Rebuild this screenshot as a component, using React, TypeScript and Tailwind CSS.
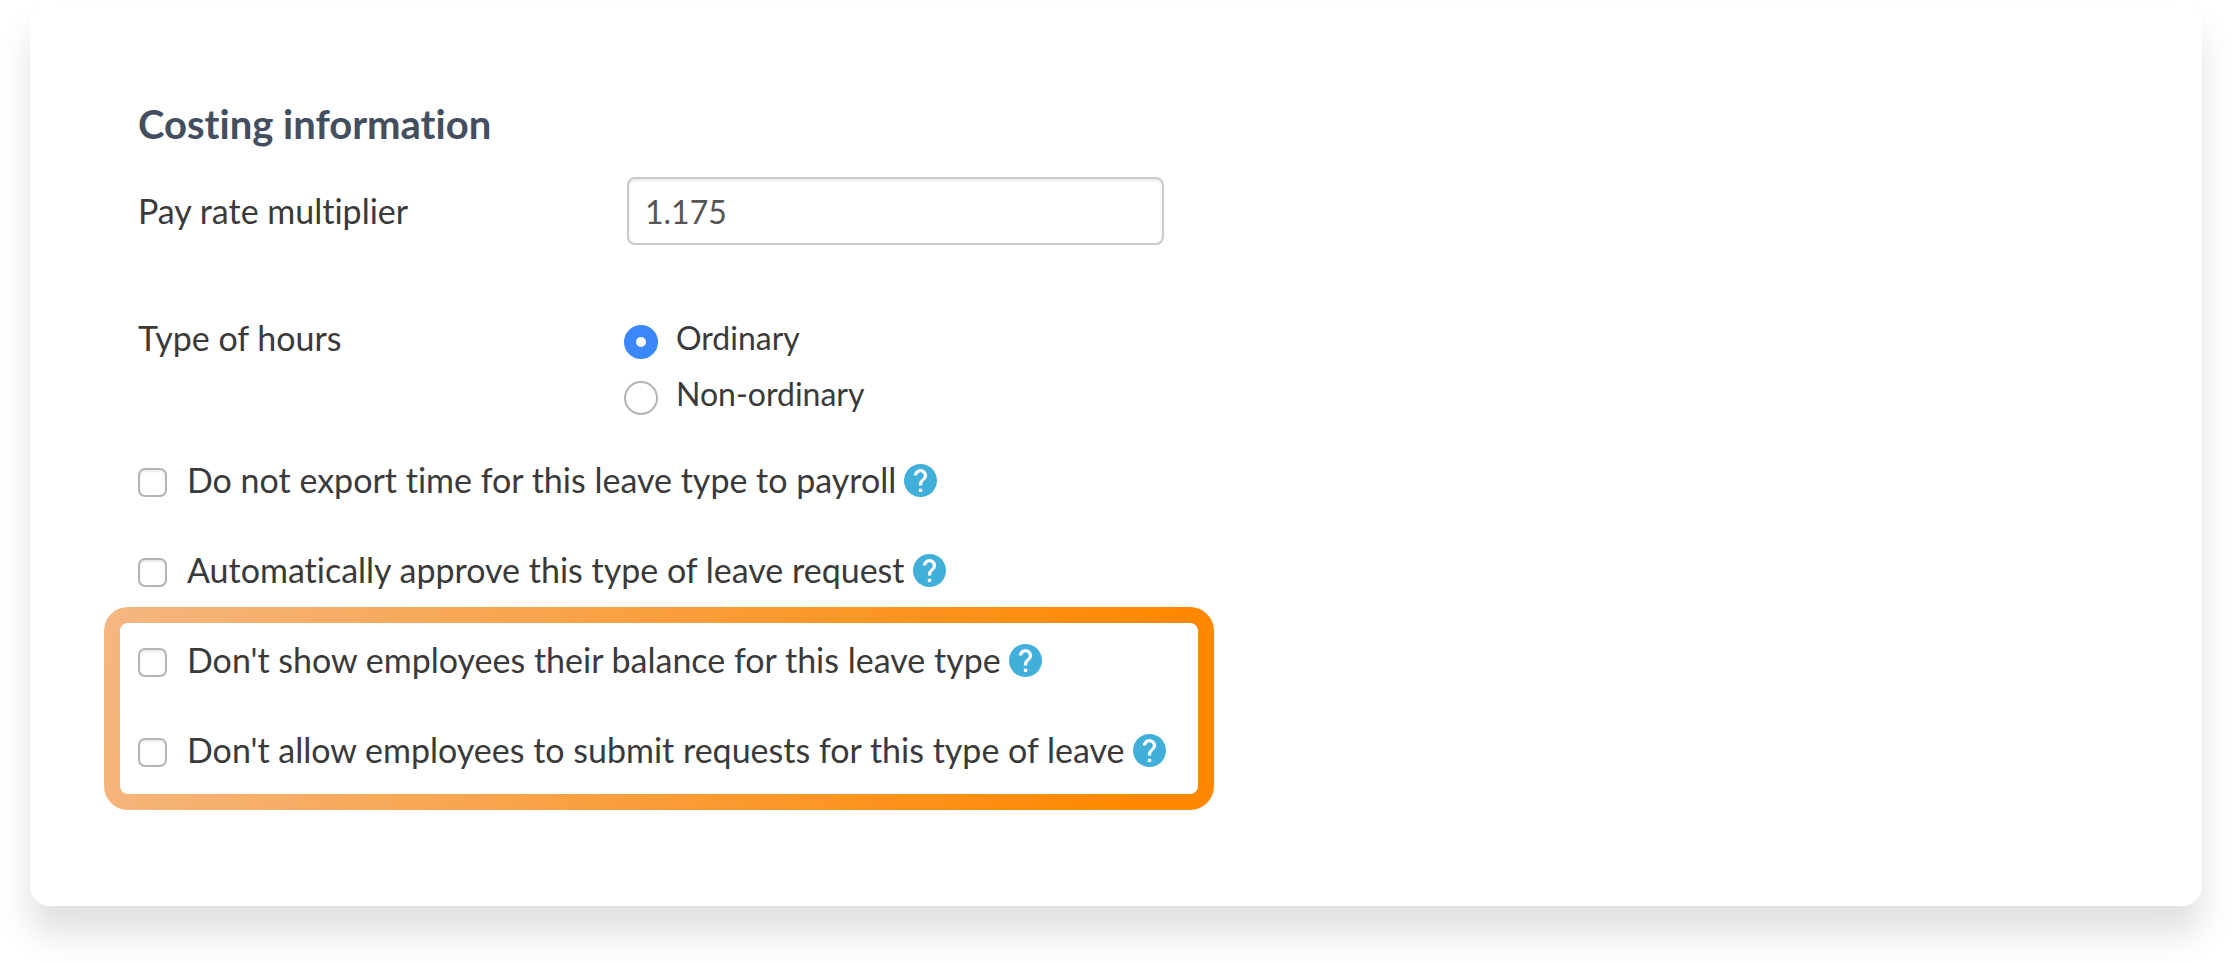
import { useState } from "react";

type OptionRowProps = {
  id: string;
  label: string;
};

const payrollOptions: OptionRowProps[] = [
  { id: "no-export", label: "Do not export time for this leave type to payroll" },
  { id: "auto-approve", label: "Automatically approve this type of leave request" },
];

const employeeOptions: OptionRowProps[] = [
  { id: "hide-balance", label: "Don't show employees their balance for this leave type" },
  { id: "block-requests", label: "Don't allow employees to submit requests for this type of leave" },
];

const hourTypes = ["Ordinary", "Non-ordinary"];

function HelpIcon() {
  return (
    <svg viewBox="2 2 20 20" className="h-[33px] w-[33px]" aria-hidden="true">
      <circle cx="12" cy="12" r="10" fill="#40afd9" />
      <path
        fill="#fff"
        d="M13 19h-2v-2h2v2zm2.07-7.75-.9.92C13.45 12.9 13 13.5 13 15h-2v-.5c0-1.1.45-2.1 1.17-2.83l1.24-1.26c.37-.36.59-.86.59-1.41 0-1.1-.9-2-2-2s-2 .9-2 2H8c0-2.21 1.79-4 4-4s4 1.79 4 4c0 .88-.36 1.68-.93 2.25z"
      />
    </svg>
  );
}

function OptionRow({ id, label }: OptionRowProps) {
  return (
    <div className="flex h-12 items-center">
      <input
        id={id}
        type="checkbox"
        className="mt-1 mr-5 h-[29px] w-[29px] shrink-0 appearance-none rounded-[7px] border-2 border-[#b4b4b4] bg-white shadow-[inset_0_2px_2px_rgba(0,0,0,0.08)] checked:bg-[#3b88fd]"
      />
      <label htmlFor={id}>{label}</label>
      <button type="button" aria-label={`Help: ${label}`} className="ml-2 shrink-0">
        <HelpIcon />
      </button>
    </div>
  );
}

export default function App() {
  const [multiplier, setMultiplier] = useState("1.175");
  const [hours, setHours] = useState("Ordinary");

  return (
    <div className="overflow-hidden bg-white px-[30px] pt-0.5 pb-[58px] font-['Lato',sans-serif] text-[34px] leading-12 text-[#3a3a3a] [font-variant-ligatures:none]">
      <main className="rounded-[20px] bg-white px-[108px] pt-[98px] pb-24 shadow-[0_28px_34px_rgba(0,0,0,0.12)]">
        <h1 className="text-[40px] font-bold text-[#434e5e]">Costing information</h1>

        <div className="mt-[29px] flex items-center">
          <label htmlFor="multiplier" className="w-[489px]">
            Pay rate multiplier
          </label>
          <input
            id="multiplier"
            type="text"
            value={multiplier}
            onChange={(e) => setMultiplier(e.target.value)}
            className="h-[68px] w-[537px] rounded-lg border-2 border-[#cacaca] px-4 text-[32px] text-[#555] shadow-[inset_0_2px_3px_rgba(0,0,0,0.08)] outline-none"
          />
        </div>

        <fieldset className="mt-[69px]">
          <div className="flex items-start">
            <legend className="w-[486px]">Type of hours</legend>
            <div className="flex flex-col gap-2 text-[32px]">
              {hourTypes.map((type) => (
                <label key={type} className="flex h-12 items-center">
                  <input
                    type="radio"
                    name="hours"
                    checked={hours === type}
                    onChange={() => setHours(type)}
                    className="mt-2 mr-[18px] h-[34px] w-[34px] appearance-none rounded-full border-2 border-[#b4b4b4] bg-white checked:border-[12px] checked:border-[#3b88fd]"
                  />
                  {type}
                </label>
              ))}
            </div>
          </div>
        </fieldset>

        <div className="mt-[38px] flex flex-col gap-[42px]">
          {payrollOptions.map((option) => (
            <OptionRow key={option.id} {...option} />
          ))}
        </div>

        {/* highlighted group, pulled left so its rows line up with the ones above */}
        <div className="mt-[13px] -ml-[34px] w-[1110px] rounded-3xl bg-[linear-gradient(105deg,#f4b781_0%,#ff8800_92%)] p-4">
          <div className="flex flex-col gap-[42px] rounded-lg bg-white px-[18px] pt-[13px] pb-5">
            {employeeOptions.map((option) => (
              <OptionRow key={option.id} {...option} />
            ))}
          </div>
        </div>
      </main>
    </div>
  );
}
